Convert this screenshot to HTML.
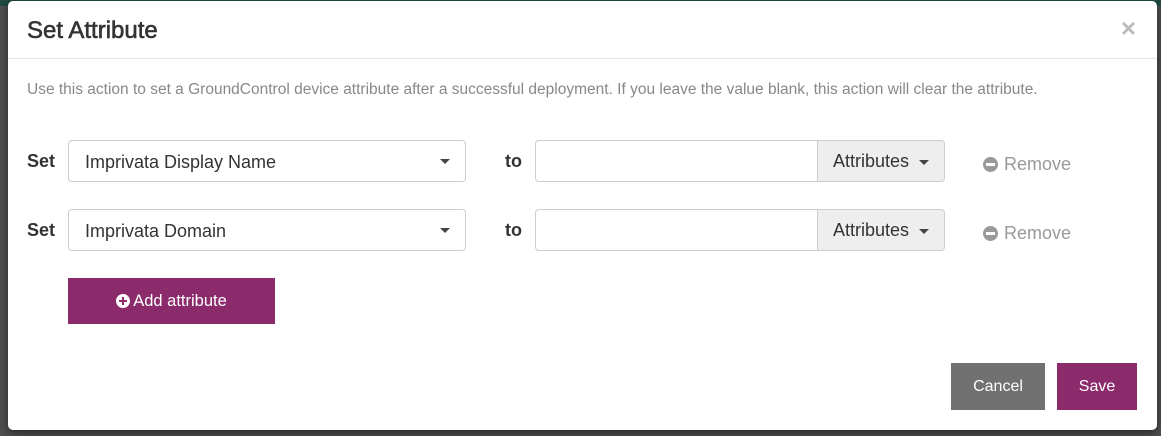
<!DOCTYPE html>
<html><head><style>
*{box-sizing:border-box;margin:0;padding:0}
body{width:1161px;height:436px;overflow:hidden;background:#4f4f4f;font-family:"Liberation Sans",Arial,sans-serif;position:relative}
.top{position:absolute;left:0;top:0;width:1161px;height:6px;background:#1e4a40}
.modal{position:absolute;left:8px;top:1px;width:1149px;height:429px;background:#fff;border-radius:5px;box-shadow:0 3px 9px rgba(0,0,0,.5)}
.hdr{height:58px;border-bottom:1px solid #e5e5e5;position:relative}
.hdr h1{position:absolute;left:19px;top:16px;font-size:24px;font-weight:normal;color:#333;-webkit-text-stroke:.6px #333}
.x{position:absolute;right:21px;top:12px;font-size:26px;color:#bbb;font-weight:bold}
.desc{position:absolute;left:19px;top:80px;font-size:15.5px;color:#888;white-space:nowrap}
.abs{position:absolute}
.lbl{font-size:18px;font-weight:bold;color:#333}
.sel{width:398px;height:42px;border:1px solid #ccc;border-radius:4px;font-size:18px;color:#333;padding:11px 16px}
.caret{position:absolute;width:0;height:0;border-left:5px solid transparent;border-right:5px solid transparent;border-top:5px solid #444}
.ig{width:410px;height:42px;border:1px solid #ccc;border-radius:4px;overflow:hidden}
.ig .b{position:absolute;left:281px;top:0;width:128px;height:40px;background:#eee;border-left:1px solid #ccc;font-size:18px;color:#333;padding:10px 15px}
.ig .b i{position:absolute;left:101px;top:19px;border-left:5px solid transparent;border-right:5px solid transparent;border-top:5px solid #444}
.rm{font-size:18px;color:#999}
.dot{display:inline-block;width:15px;height:15px;border-radius:50%;background:#999;position:relative;vertical-align:-2px;margin-right:6px}
.dot:after{content:"";position:absolute;left:3px;top:6px;width:9px;height:3px;background:#fff}
.add{width:207px;height:46px;background:#8c2b6c;color:#fff;font-size:16.5px;text-align:center;padding-top:14px}
.plus{display:inline-block;width:14px;height:14px;border-radius:50%;background:#fff;position:relative;vertical-align:-2px;margin-right:3px}
.plus:before{content:"";position:absolute;left:3px;top:6px;width:8px;height:2px;background:#8c2b6c}
.plus:after{content:"";position:absolute;left:6px;top:3px;width:2px;height:8px;background:#8c2b6c}
.btn{height:47px;color:#fff;font-size:16px;text-align:center;padding-top:15px}
</style></head><body>
<div class="top"></div>
<div class="modal">
<div class="hdr"><h1>Set Attribute</h1><div class="x">×</div></div>
<div class="desc">Use this action to set a GroundControl device attribute after a successful deployment. If you leave the value blank, this action will clear the attribute.</div>

<div class="abs lbl" style="left:19px;top:150px">Set</div>
<div class="abs sel" style="left:60px;top:139px">Imprivata Display Name</div>
<div class="caret" style="left:432px;top:158px"></div>
<div class="abs lbl" style="left:497px;top:150px">to</div>
<div class="abs ig" style="left:527px;top:139px"><div class="b">Attributes<i></i></div></div>
<div class="abs rm" style="left:975px;top:153px"><span class="dot"></span>Remove</div>

<div class="abs lbl" style="left:19px;top:219px">Set</div>
<div class="abs sel" style="left:60px;top:208px">Imprivata Domain</div>
<div class="caret" style="left:432px;top:227px"></div>
<div class="abs lbl" style="left:497px;top:219px">to</div>
<div class="abs ig" style="left:527px;top:208px"><div class="b">Attributes<i></i></div></div>
<div class="abs rm" style="left:975px;top:222px"><span class="dot"></span>Remove</div>

<div class="abs add" style="left:60px;top:277px"><span class="plus"></span>Add attribute</div>
<div class="abs btn" style="left:943px;top:362px;width:94px;background:#717171">Cancel</div>
<div class="abs btn" style="left:1049px;top:362px;width:80px;background:#8c2b6c">Save</div>
</div>
</body></html>
